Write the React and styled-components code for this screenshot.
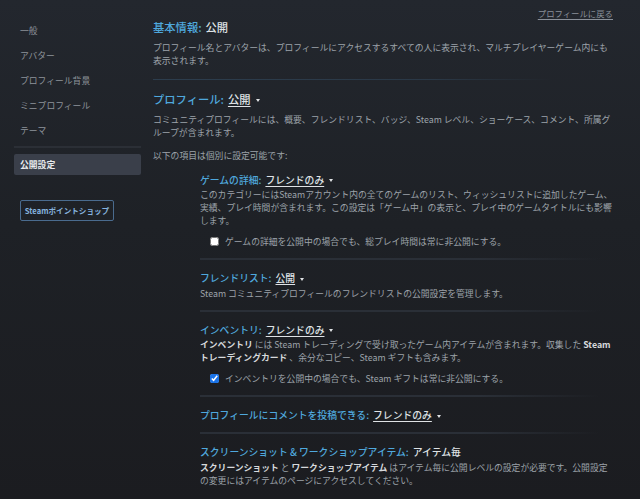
import React from 'react';
import styled, { createGlobalStyle } from 'styled-components';

const GlobalStyle = createGlobalStyle`
  html, body {
    margin: 0;
    padding: 0;
    min-height: 100%;
    background: linear-gradient(to bottom, #23272e 0%, #1e2126 45%, #1b1c20 100%);
    font-family: "Noto Sans CJK JP", "Noto Sans", sans-serif;
  }
  #root {
    min-height: 100vh;
  }
`;

const Page = styled.div`
  display: grid;
  grid-template-columns: 127px 462px;
  column-gap: 12px;
  padding: 6px 0 0 14px;
  min-height: 100vh;
  box-sizing: border-box;
`;

const Sidebar = styled.nav`
  display: flex;
  flex-direction: column;
  padding-top: 11.5px;
`;

const NavItem = styled.div`
  height: ${({ $active }) => ($active ? '21px' : '25px')};
  line-height: ${({ $active }) => ($active ? '21px' : '25px')};
  padding-left: 6px;
  font-size: 8.8px;
  color: ${({ $active }) => ($active ? '#e8eaed' : '#8d939a')};
  font-weight: ${({ $active }) => ($active ? 700 : 400)};
  background: ${({ $active }) => ($active ? '#3a3f4a' : 'transparent')};
  border-radius: 2px;
  margin-top: ${({ $active }) => ($active ? '6px' : '0')};
`;

const NavDivider = styled.div`
  height: 2px;
  margin-top: 3.5px;
  background: #2b2f36;
`;

const ShopButton = styled.button`
  margin: 25px 0 0 6px;
  width: 94px;
  height: 21px;
  padding: 0;
  background: transparent;
  border: 1px solid #4a6b8e;
  border-radius: 2px;
  color: #86b3df;
  font-family: inherit;
  font-size: 7.6px;
  font-weight: 700;
  cursor: pointer;
`;

const Main = styled.main`
  display: flex;
  flex-direction: column;
`;

const TopBar = styled.div`
  display: flex;
  justify-content: flex-end;
  height: 14px;
  padding-right: 2px;
`;

const BackLink = styled.a`
  font-size: 8.4px;
  line-height: 14px;
  color: #8a9099;
  text-decoration: underline;
  text-underline-offset: 2px;
`;

const Heading = styled.h2`
  margin: 0;
  font-size: 11.3px;
  line-height: 15px;
  font-weight: 500;
  color: #4fa8dd;
`;

const SubHeading = styled.h3`
  margin: 0;
  font-size: 9.8px;
  line-height: 14px;
  font-weight: 500;
  color: #4fa8dd;
`;

const Value = styled.span`
  color: #dfe2e5;
  margin-left: 4px;
  text-decoration: ${({ $dropdown }) => ($dropdown ? 'underline' : 'none')};
  text-underline-offset: 2px;
  text-decoration-thickness: 1px;
`;

const Caret = styled.span`
  display: inline-block;
  margin-left: 5px;
  vertical-align: middle;
  width: 0;
  height: 0;
  border-left: 2.5px solid transparent;
  border-right: 2.5px solid transparent;
  border-top: 3px solid #dfe2e5;
`;

const Para = styled.p`
  margin: ${({ $gap }) => $gap || '6px'} 0 0;
  font-size: 8.8px;
  line-height: 13px;
  color: #9da3aa;

  b {
    color: #d6d9dc;
    font-weight: 700;
  }
`;

const MainDivider = styled.div`
  height: 1px;
  margin: 11.5px 0 12px;
  width: 400px;
  background: linear-gradient(to right, #2c3d4d 0%, #2a3846 70%, rgba(42, 56, 70, 0) 100%);
`;

const SubList = styled.div`
  display: flex;
  flex-direction: column;
  margin-left: 47px;
`;

const SubSection = styled.section`
  padding: 11px 0 10px;
`;

const SubDivider = styled.div`
  height: 2px;
  width: 400px;
  background: linear-gradient(to right, #2a2f37 0%, #2a2f37 70%, rgba(42, 47, 55, 0) 100%);
`;

const CheckRow = styled.label`
  display: flex;
  align-items: center;
  gap: 6px;
  margin: 8px 0 0 10px;
  font-size: 8.8px;
  line-height: 13px;
  color: #9da3aa;
`;

const Check = styled.input`
  width: 9px;
  height: 9px;
  margin: 0;
  accent-color: #1a73e8;
`;

const navItems = ['一般', 'アバター', 'プロフィール背景', 'ミニプロフィール', 'テーマ'];

const App = () => {
  return (
    <>
      <GlobalStyle />
      <Page>
        <Sidebar>
          {navItems.map((item) => (
            <NavItem key={item}>{item}</NavItem>
          ))}
          <NavDivider />
          <NavItem $active>公開設定</NavItem>
          <ShopButton>Steamポイントショップ</ShopButton>
        </Sidebar>

        <Main>
          <TopBar>
            <BackLink>プロフィールに戻る</BackLink>
          </TopBar>

          <Heading>
            基本情報:<Value>公開</Value>
          </Heading>
          <Para>
            プロフィール名とアバターは、プロフィールにアクセスするすべての人に表示され、マルチプレイヤーゲーム内にも表示されます。
          </Para>

          <MainDivider />

          <Heading>
            プロフィール:<Value $dropdown>公開</Value>
            <Caret />
          </Heading>
          <Para>
            コミュニティプロフィールには、概要、フレンドリスト、バッジ、Steam レベル、ショーケース、コメント、所属グループが含まれます。
          </Para>
          <Para $gap="10px">以下の項目は個別に設定可能です:</Para>

          <SubList>
            <SubSection>
              <SubHeading>
                ゲームの詳細:<Value $dropdown>フレンドのみ</Value>
                <Caret />
              </SubHeading>
              <Para $gap="1.5px">
                このカテゴリーにはSteamアカウント内の全てのゲームのリスト、ウィッシュリストに追加したゲーム、実績、プレイ時間が含まれます。この設定は「ゲーム中」の表示と、プレイ中のゲームタイトルにも影響します。
              </Para>
              <CheckRow>
                <Check type="checkbox" />
                ゲームの詳細を公開中の場合でも、総プレイ時間は常に非公開にする。
              </CheckRow>
            </SubSection>
            <SubDivider />

            <SubSection>
              <SubHeading>
                フレンドリスト:<Value $dropdown>公開</Value>
                <Caret />
              </SubHeading>
              <Para $gap="1.5px">Steam コミュニティプロフィールのフレンドリストの公開設定を管理します。</Para>
            </SubSection>
            <SubDivider />

            <SubSection>
              <SubHeading>
                インベントリ:<Value $dropdown>フレンドのみ</Value>
                <Caret />
              </SubHeading>
              <Para $gap="1.5px">
                <b>インベントリ</b> には Steam トレーディングで受け取ったゲーム内アイテムが含まれます。収集した <b>Steam トレーディングカード</b> 、余分なコピー、Steam ギフトも含みます。
              </Para>
              <CheckRow>
                <Check type="checkbox" defaultChecked />
                インベントリを公開中の場合でも、Steam ギフトは常に非公開にする。
              </CheckRow>
            </SubSection>
            <SubDivider />

            <SubSection>
              <SubHeading>
                プロフィールにコメントを投稿できる:<Value $dropdown>フレンドのみ</Value>
                <Caret />
              </SubHeading>
            </SubSection>
            <SubDivider />

            <SubSection>
              <SubHeading>
                スクリーンショット &amp; ワークショップアイテム:<Value>アイテム毎</Value>
              </SubHeading>
              <Para $gap="1.5px">
                <b>スクリーンショット</b> と <b>ワークショップアイテム</b> はアイテム毎に公開レベルの設定が必要です。公開設定の変更にはアイテムのページにアクセスしてください。
              </Para>
            </SubSection>
          </SubList>
        </Main>
      </Page>
    </>
  );
};

export default App;
